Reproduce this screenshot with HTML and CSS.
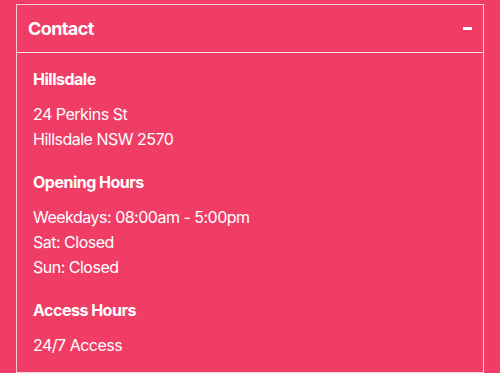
FILE: index.html
```html
<!DOCTYPE html>
<html lang="en">
<head>
  <meta charset="UTF-8">
  <meta name="viewport" content="width=device-width, initial-scale=1.0">
  <title>Contact</title>
  <link rel="stylesheet" href="styles.css">
</head>
<body>
  <div class="panel">
    <div class="panel-header">
      <h2>Contact</h2>
      <span class="toggle" aria-label="Collapse"></span>
    </div>
    <div class="panel-body">
      <h3>Hillsdale</h3>
      <p>24 Perkins St<br>Hillsdale NSW 2570</p>

      <h3>Opening Hours</h3>
      <p>Weekdays: 08:00am - 5:00pm<br>Sat: Closed<br>Sun: Closed</p>

      <h3>Access Hours</h3>
      <p>24/7 Access</p>
    </div>
  </div>
</body>
</html>
```

FILE: styles.css
```css
body {
  font-family: Inter, "Open Sans", sans-serif;
  background-color: #ef3d66;
  color: #fff;
  margin: 0;
  padding: 4px 16px 0;
}
.panel {
  border: 1px solid rgba(255, 255, 255, 0.75);
}
.panel-header {
  display: flex;
  justify-content: space-between;
  align-items: center;
  height: 47px;
  padding: 0 11px 0 11px;
  border-bottom: 1px solid rgba(255, 255, 255, 0.85);
}
.panel-header h2 {
  margin: 0;
  font-size: 18px;
  font-weight: 700;
  letter-spacing: -0.6px;
}
.toggle {
  display: block;
  width: 9px;
  height: 3px;
  background: #fff;
  margin-bottom: 1px;
}
.panel-body {
  padding: 14px 16px 14px;
}
.panel-body h3 {
  margin: 0 0 10px;
  font-size: 16px;
  font-weight: 700;
  line-height: 25px;
  letter-spacing: -0.5px;
}
.panel-body p {
  margin: 0 0 18px;
  font-size: 16px;
  line-height: 25px;
  letter-spacing: -0.5px;
}
.panel-body p:last-child { margin-bottom: 0; }
```
